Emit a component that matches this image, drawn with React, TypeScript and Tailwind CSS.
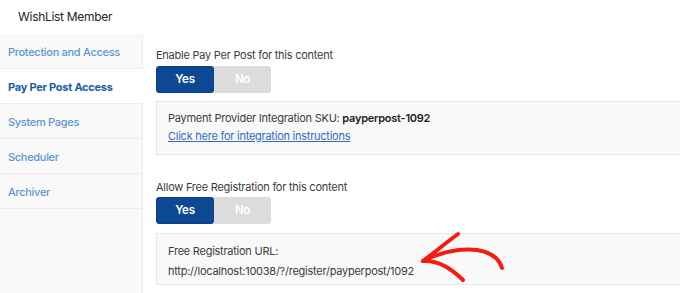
import React from "react";

const navItems = [
  "Protection and Access",
  "Pay Per Post Access",
  "System Pages",
  "Scheduler",
  "Archiver",
];

function Toggle() {
  return (
    <div className="flex h-[27px] w-[115px] rounded-[3px] bg-[#dcdcdc] text-[11.5px] font-semibold">
      <div className="flex w-[58px] items-center justify-center rounded-[3px] border border-[#0d3f82] bg-[#0c4894] text-white">
        Yes
      </div>
      <div className="flex flex-1 items-center justify-center text-white">No</div>
    </div>
  );
}

function Arrow() {
  return (
    <svg
      className="absolute left-[415px] top-[228px]"
      width="100"
      height="60"
      viewBox="0 0 100 60"
      fill="none"
    >
      <path
        d="M43 6 C32 14 20 24 8 33 C26 24 45 20 62 22 C75 24 84 30 87 40"
        stroke="#f41b10"
        strokeWidth="4"
        strokeLinecap="round"
        strokeLinejoin="round"
      />
      <path
        d="M8 33 C22 32 34 38 48 52"
        stroke="#f41b10"
        strokeWidth="4"
        strokeLinecap="round"
      />
    </svg>
  );
}

export default function App() {
  return (
    <div
      className="relative h-[293px] w-[680px] overflow-hidden bg-white text-[#3c3c3c]"
      style={{ fontFamily: "Inter, 'Open Sans', sans-serif" }}
    >
      <div className="flex h-[34px] items-center pl-[18px] text-[12px] tracking-[-0.3px] text-[#1d1d1d]">
        WishList Member
      </div>
      <div className="flex h-[259px]">
        {/* Sidebar */}
        <nav className="w-[143px] shrink-0 border-r border-[#ececec] bg-[#f9f9f9]">
          {navItems.map((item, i) => {
            const active = i === 1;
            return (
              <div
                key={item}
                className={
                  active
                    ? "-mr-px flex h-[35px] items-center border-b border-[#ececec] bg-white pl-[8px] pt-[2px] text-[11px] font-bold tracking-[-0.25px] text-[#1a5aa6]"
                    : "flex h-[35px] items-center border-b border-[#ececec] pl-[8px] pt-[2px] text-[11px] font-medium tracking-[-0.3px] text-[#5b95d3]"
                }
              >
                {item}
              </div>
            );
          })}
        </nav>

        {/* Content */}
        <div className="flex-1 pl-[13px] pt-[13px] text-[11px] tracking-[-0.25px]">
          <div className="mb-[3px] h-[16px] leading-[16px]">Enable Pay Per Post for this content</div>
          <div className="h-[26px]">
            <Toggle />
          </div>
          <div className="mt-[9px] h-[54px] border border-r-0 border-[#e6e6e6] bg-[#f9f9f9] pl-[11px] pt-[7px] leading-[18px]">
            <div>
              Payment Provider Integration SKU:{" "}
              <span className="font-semibold text-[#222]">payperpost-1092</span>
            </div>
            <a className="text-[#2d6bc4] underline" href="#">
              Click here for integration instructions
            </a>
          </div>

          <div className="mb-[2px] mt-[24px] h-[16px] leading-[16px]">
            Allow Free Registration for this content
          </div>
          <Toggle />
          <div className="mt-[9px] h-[52px] border border-r-0 border-[#e6e6e6] bg-[#f9f9f9] pl-[11px] pt-[7px] leading-[20px]">
            <div>Free Registration URL:</div>
            <div>http://localhost:10038/?/register/payperpost/1092</div>
          </div>
        </div>
      </div>
      <Arrow />
    </div>
  );
}
